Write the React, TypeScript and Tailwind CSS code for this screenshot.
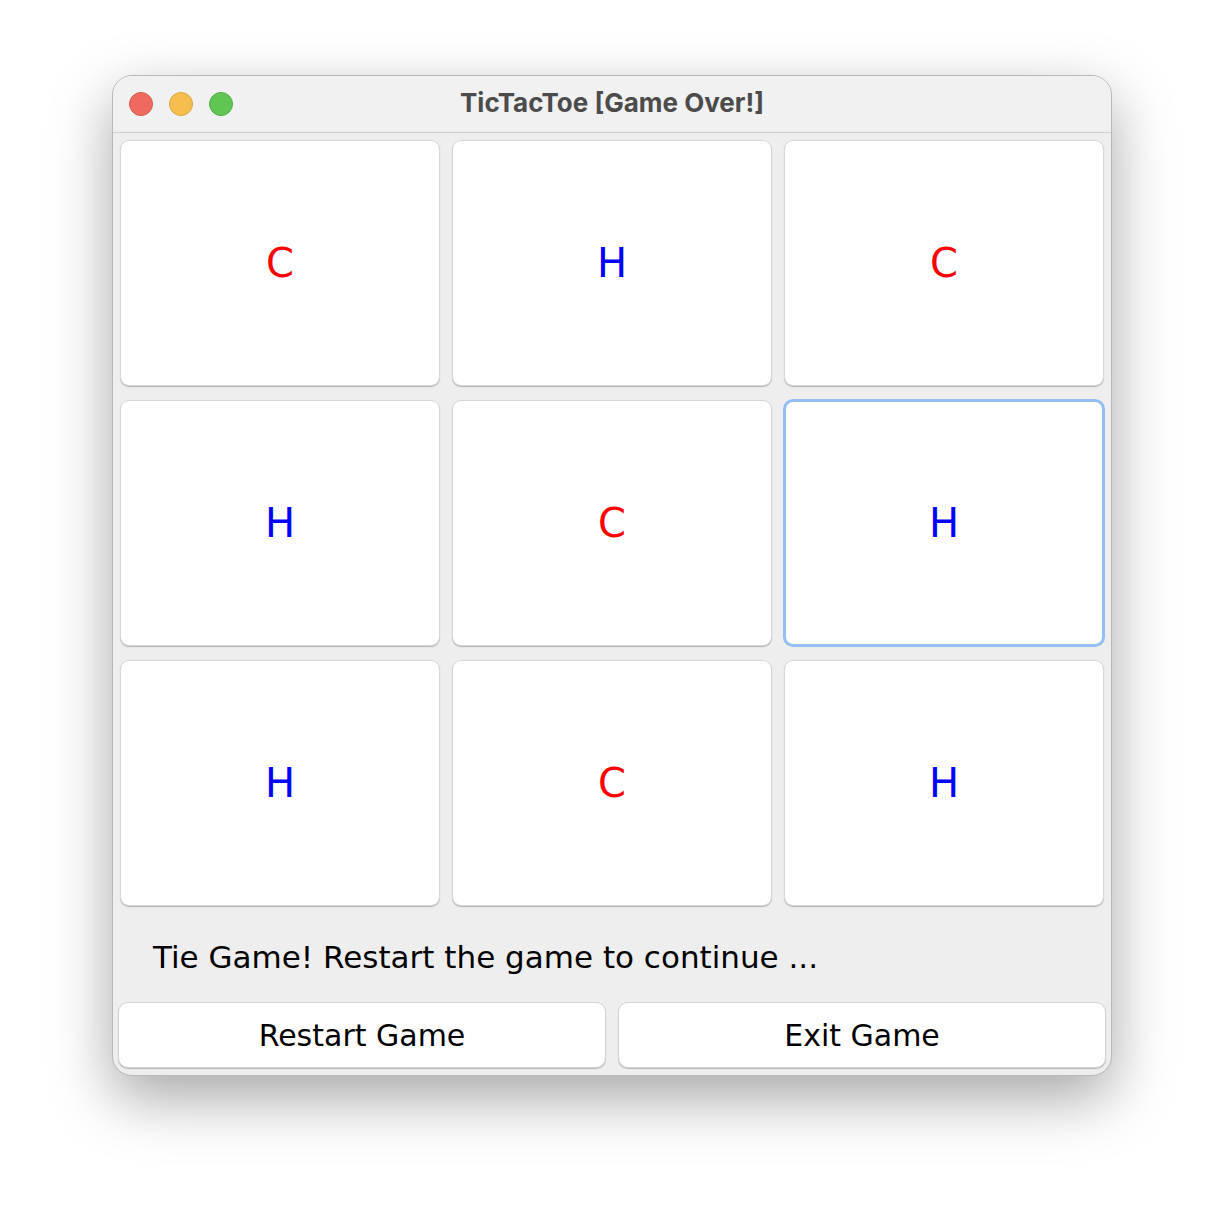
const board: ("C" | "H")[] = ["C", "H", "C", "H", "C", "H", "H", "C", "H"];

function TrafficLights() {
  return (
    <div className="flex items-center gap-4 pl-4">
      <div className="h-6 w-6 rounded-full border border-[#d9564c] bg-[#ee6a5f]" />
      <div className="h-6 w-6 rounded-full border border-[#dea33a] bg-[#f5be4f]" />
      <div className="h-6 w-6 rounded-full border border-[#4cad42] bg-[#61c554]" />
    </div>
  );
}

export default function App() {
  return (
    <div className="flex min-h-screen items-start justify-center bg-white pt-[75px]">
      <div className="w-[1000px] overflow-hidden rounded-[20px] border border-[#b8b8b8] bg-[#eeeeee] shadow-[0_22px_60px_rgba(0,0,0,0.35)]">
        {/* title bar */}
        <div className="relative flex h-[57px] items-center border-b border-[#cfcfcf] bg-[#f0f1f0]">
          <TrafficLights />
          <div className="absolute inset-0 flex items-center justify-center pb-[3px] text-[26px] font-bold text-[#4b4b4b] [font-family:Inter,sans-serif]">
            TicTacToe [Game Over!]
          </div>
        </div>

        {/* board */}
        <div className="grid grid-cols-3 gap-x-3 gap-y-[14px] px-[7px] pt-[7px]">
          {board.map((v, i) => (
            <div
              key={i}
              className={
                i === 5
                  ? "-m-px flex h-[248px] items-center justify-center rounded-[10px] border-[3px] border-[#92bff3] bg-white"
                  : "flex h-[246px] items-center justify-center rounded-[9px] border border-[#d6d6d6] bg-white shadow-[0_1px_1px_rgba(0,0,0,0.25)]"
              }
            >
              <span
                className={
                  v === "C"
                    ? "text-[40px] text-[#ff0000] [font-family:'DejaVu_Sans',sans-serif]"
                    : "text-[40px] text-[#0000ff] [font-family:'DejaVu_Sans',sans-serif]"
                }
              >
                {v}
              </span>
            </div>
          ))}
        </div>

        {/* status */}
        <div className="flex h-[96px] items-center pl-10 pt-[6px] text-[31px] text-black [font-family:'DejaVu_Sans',sans-serif]">
          Tie Game! Restart the game to continue ...
        </div>

        {/* buttons */}
        <div className="grid grid-cols-2 gap-3 px-[5px] pb-[7px]">
          <button className="h-[66px] rounded-[10px] border border-[#d4d4d4] bg-white text-[30px] text-black shadow-[0_1px_1px_rgba(0,0,0,0.25)] [font-family:'DejaVu_Sans',sans-serif]">
            Restart Game
          </button>
          <button className="h-[66px] rounded-[10px] border border-[#d4d4d4] bg-white text-[30px] text-black shadow-[0_1px_1px_rgba(0,0,0,0.25)] [font-family:'DejaVu_Sans',sans-serif]">
            Exit Game
          </button>
        </div>
      </div>
    </div>
  );
}
